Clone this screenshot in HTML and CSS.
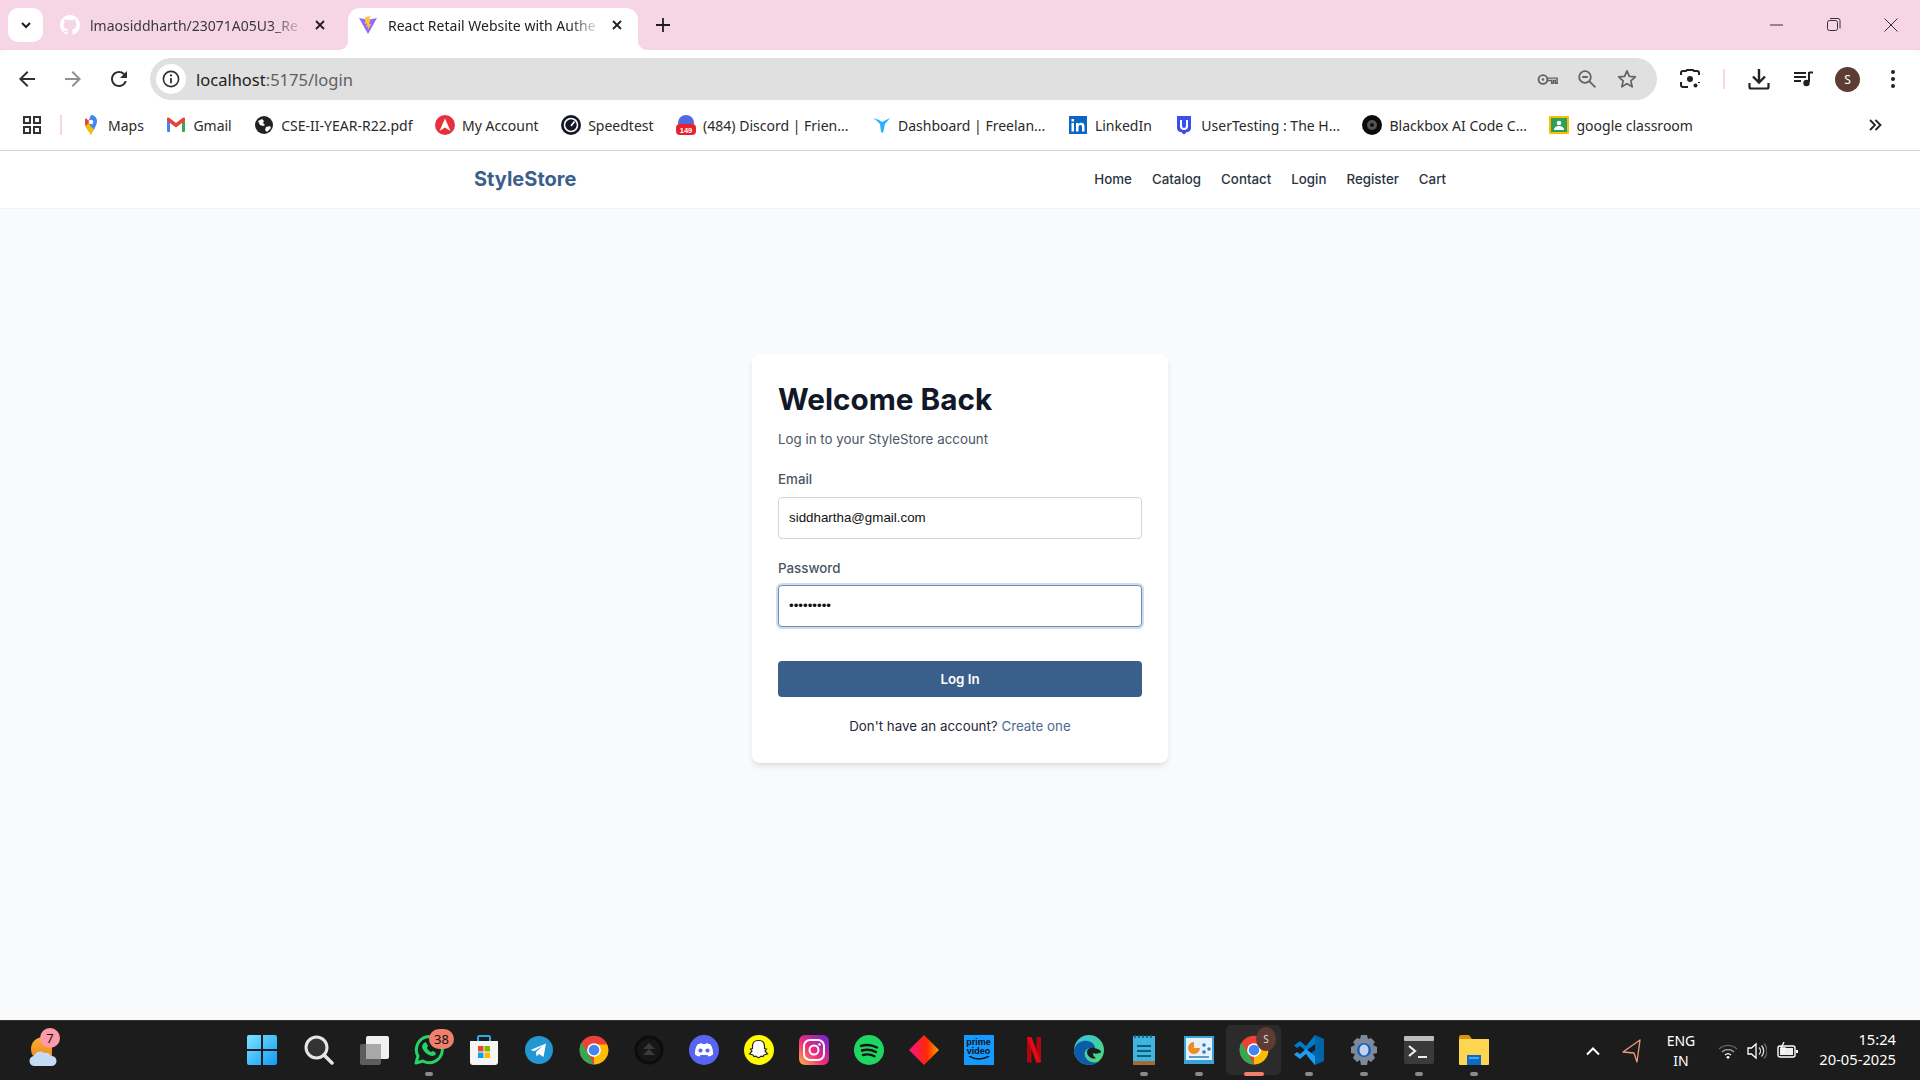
FILE: index.html
```html
<!DOCTYPE html>
<html lang="en">
<head>
<meta charset="utf-8">
<title>React Retail Website with Authentication</title>
<link rel="stylesheet" href="styles.css">
</head>
<body>
<header class="tabstrip">
  <div class="tab-search"><svg width="12" height="12" viewBox="0 0 12 12"><path d="M2 4l4 4 4-4" fill="none" stroke="#1f1f1f" stroke-width="2"/></svg></div>
  <div class="tab tab-idle">
    <svg width="20" height="20" viewBox="0 0 16 16"><path fill="#fff" d="M8 0C3.58 0 0 3.58 0 8c0 3.54 2.29 6.53 5.47 7.59.4.07.55-.17.55-.38 0-.19-.01-.82-.01-1.49-2.01.37-2.53-.49-2.69-.94-.09-.23-.48-.94-.82-1.13-.28-.15-.68-.52-.01-.53.63-.01 1.08.58 1.23.82.72 1.21 1.87.87 2.33.66.07-.52.28-.87.51-1.07-1.78-.2-3.64-.89-3.64-3.95 0-.87.31-1.59.82-2.15-.08-.2-.36-1.02.08-2.12 0 0 .67-.21 2.2.82.64-.18 1.32-.27 2-.27.68 0 1.36.09 2 .27 1.53-1.04 2.2-.82 2.2-.82.44 1.1.16 1.92.08 2.12.51.56.82 1.27.82 2.15 0 3.07-1.87 3.75-3.65 3.95.29.25.54.73.54 1.48 0 1.07-.01 1.93-.01 2.2 0 .21.15.46.55.38A8.013 8.013 0 0016 8c0-4.42-3.58-8-8-8z"/></svg>
    <span class="tab-title">lmaosiddharth/23071A05U3_Re</span>
    <svg class="tab-x" width="12" height="12" viewBox="0 0 12 12"><path d="M2 2l8 8M10 2l-8 8" stroke="#1f1f1f" stroke-width="1.8"/></svg>
  </div>
  <div class="tab tab-active">
    <svg width="20" height="20" viewBox="0 0 20 20"><path fill="#8f6bff" d="M1 3l9 16 9-16-9 1.7z"/><path fill="#ffc62b" d="M12.6 1L7.4 2 7 9l2-.4-.6 3.4 2-.5-.8 4 3.6-6.6-2.1.4 1.4-4.7-1.9.4z"/></svg>
    <span class="tab-title">React Retail Website with Authe</span>
    <svg class="tab-x" width="12" height="12" viewBox="0 0 12 12"><path d="M2 2l8 8M10 2l-8 8" stroke="#1f1f1f" stroke-width="1.8"/></svg>
  </div>
  <svg class="tab-new" width="14" height="14" viewBox="0 0 14 14"><path d="M7 0v14M0 7h14" stroke="#1f1f1f" stroke-width="1.8"/></svg>
  <div class="win-controls">
    <svg width="14" height="14" viewBox="0 0 14 14"><path d="M0 7h13" stroke="#333" stroke-width="1"/></svg>
    <svg width="14" height="14" viewBox="0 0 14 14"><rect x=".5" y="2.5" width="10" height="10" rx="2" fill="none" stroke="#333"/><path d="M3 .5h8a2 2 0 012 2v8" fill="none" stroke="#333"/></svg>
    <svg width="14" height="14" viewBox="0 0 14 14"><path d="M.5.5l13 13M13.5.5l-13 13" stroke="#333"/></svg>
  </div>
</header>

<div class="toolbar">
  <div class="nav-arrows">
    <svg width="24" height="24" viewBox="0 0 24 24"><path fill="#303030" d="M20 11H7.83l5.59-5.59L12 4l-8 8 8 8 1.41-1.41L7.83 13H20v-2z"/></svg>
    <svg width="24" height="24" viewBox="0 0 24 24"><path fill="#909090" d="M4 11h12.17l-5.59-5.59L12 4l8 8-8 8-1.41-1.41L16.17 13H4v-2z"/></svg>
    <svg width="24" height="24" viewBox="0 0 24 24"><path fill="#303030" d="M17.65 6.35A7.958 7.958 0 0012 4c-4.42 0-7.99 3.58-7.99 8s3.57 8 7.99 8c3.73 0 6.84-2.55 7.73-6h-2.08A5.99 5.99 0 0112 18c-3.31 0-6-2.69-6-6s2.69-6 6-6c1.66 0 3.14.69 4.22 1.78L13 11h7V4l-2.35 2.35z"/></svg>
  </div>
  <div class="omnibox">
    <span class="site-info"><svg width="18" height="18" viewBox="0 0 18 18"><circle cx="9" cy="9" r="7.6" fill="none" stroke="#303030" stroke-width="1.6"/><path d="M9 8v5.2" stroke="#303030" stroke-width="1.8"/><circle cx="9" cy="5.4" r="1.1" fill="#303030"/></svg></span>
    <span class="url"><span class="url-host">localhost</span>:5175/login</span>
    <div class="omni-actions">
      <svg class="oa-key" width="22" height="17" viewBox="0 0 24 18"><circle cx="6.5" cy="9" r="4.8" fill="none" stroke="#636363" stroke-width="2"/><circle cx="6.5" cy="9" r="1.4" fill="#636363"/><path d="M11 7.5h11v5.5h-2v-2.8h-2V13h-2v-2.8h-5" fill="none" stroke="#636363" stroke-width="1.6"/></svg>
      <svg width="20" height="20" viewBox="0 0 20 20"><circle cx="8" cy="8" r="5.8" fill="none" stroke="#636363" stroke-width="1.8"/><path d="M5.2 8h5.6M12.4 12.4l6 6" stroke="#636363" stroke-width="1.8"/></svg>
      <svg width="20" height="20" viewBox="0 0 20 20"><path d="M10 1.8l2.4 5.6 6 .5-4.6 4 1.4 5.9-5.2-3.2-5.2 3.2 1.4-5.9-4.6-4 6-.5z" fill="none" stroke="#636363" stroke-width="1.7" stroke-linejoin="round"/></svg>
    </div>
  </div>
  <div class="tool-actions">
    <svg class="ta-lens" width="20" height="20" viewBox="0 0 20 20"><path d="M1 6V4a2 2 0 012-2h3l1-1h6l1 1h3a2 2 0 012 2v2M1 13v3a2 2 0 002 2h5M19 13v1" fill="none" stroke="#222" stroke-width="2"/><circle cx="10" cy="10" r="3" fill="#222"/><circle cx="15.5" cy="16.5" r="2" fill="#222"/></svg>
    <span class="ta-sep"></span>
    <svg class="ta-dl" width="22" height="22" viewBox="0 0 22 22"><path d="M11 1v13M5 8.500l6 6 6-6" fill="none" stroke="#222" stroke-width="2.400"/><path d="M1.500 15v4a1.500 1.500 0 001.500 1.500h16a1.500 1.500 0 001.500-1.500v-4" fill="none" stroke="#222" stroke-width="2.200"/></svg>
    <svg class="ta-media" width="20" height="16" viewBox="0 0 20 16"><path d="M0 2h12M0 6h12M0 10h7" stroke="#222" stroke-width="1.800"/><path d="M15 1.500h4M15 1v10" stroke="#222" stroke-width="2"/><circle cx="12.500" cy="12" r="3.200" fill="#222"/></svg>
    <span class="avatar">S</span>
    <svg class="ta-dots" width="4" height="18" viewBox="0 0 4 18"><circle cx="2" cy="2" r="2" fill="#222"/><circle cx="2" cy="9" r="2" fill="#222"/><circle cx="2" cy="16" r="2" fill="#222"/></svg>
  </div>
</div>

<nav class="bookmarks">
  <svg class="bm-apps" width="20" height="20" viewBox="0 0 20 20"><g fill="none" stroke="#333" stroke-width="2"><rect x="2" y="2" width="6" height="6"/><rect x="12" y="2" width="6" height="6"/><rect x="2" y="12" width="6" height="6"/><rect x="12" y="12" width="6" height="6"/></g></svg>
  <span class="bm-sep"></span>
  <div class="bm-list">
    <span class="bm"><svg width="20" height="20" viewBox="0 0 20 20"><path fill="#34a853" d="M10 20c-1-3-6-7-6-12h8z"/><path fill="#fbbc04" d="M4 8c0 5 5 9 6 12 .5-1.500 2-3.300 3-5L5.500 6z"/><path fill="#4285f4" d="M10 0c3.500 0 6 2.700 6 6 0 3-1.500 5-3 9L7 7z"/><path fill="#ea4335" d="M4.700 3l4 3.500L5 11c-1-1-1-3-1-4.500S4 4 4.700 3z"/><circle cx="10" cy="7" r="2.300" fill="#fff"/></svg>Maps</span>
    <span class="bm"><svg width="20" height="20" viewBox="0 0 20 20"><path fill="#4285f4" d="M1 5l3 2v10H2a1 1 0 01-1-1z"/><path fill="#34a853" d="M19 5l-3 2v10h2a1 1 0 001-1z"/><path fill="#ea4335" d="M1 3.500C1 2.500 2.500 2 3.500 3L10 8l6.500-5c1-1 2.500-.5 2.500.5V6l-3 2-6 4.500L4 8 1 6z"/></svg>Gmail</span>
    <span class="bm"><svg width="20" height="20" viewBox="0 0 20 20"><circle cx="10" cy="10" r="9" fill="#222"/><path fill="#fff" d="M4 6l4-2 2 2-1 2 2 2-2 1-3-1zM12 12l4-1 1 2-4 4-2-2z"/></svg>CSE-II-YEAR-R22.pdf</span>
    <span class="bm"><svg width="20" height="20" viewBox="0 0 20 20"><circle cx="10" cy="10" r="10" fill="#e8303c"/><path fill="#fff" d="M10 3.500L15.500 16 10 12.500 4.500 16z"/></svg>My Account</span>
    <span class="bm"><svg width="20" height="20" viewBox="0 0 20 20"><circle cx="10" cy="10" r="10" fill="#141526"/><circle cx="10" cy="10" r="6.500" fill="none" stroke="#fff" stroke-width="1.600"/><path d="M10 11l3.500-4.500" stroke="#fff" stroke-width="1.800"/></svg>Speedtest</span>
    <span class="bm"><svg width="20" height="20" viewBox="0 0 20 20"><circle cx="10" cy="8" r="8" fill="#5468e0"/><rect x="0" y="9" width="20" height="11" rx="4" fill="#e8222a"/><text x="10" y="18" text-anchor="middle" class="bm-badge">149</text></svg>(484) Discord | Frien...</span>
    <span class="bm"><svg width="20" height="20" viewBox="0 0 20 20"><path fill="#29b2fe" d="M2 3l6 2 3 2 8-4-5 6-2 9-2-1-1-8-3-3z"/></svg>Dashboard | Freelan...</span>
    <span class="bm"><svg width="20" height="20" viewBox="0 0 20 20"><rect x="1" y="1" width="18" height="18" fill="#0a66c2"/><path fill="#fff" d="M3.500 8h2.500v8.500H3.500zM3.500 4h2.500v2.500H3.500zM8 8h2.400v1.200C11 8.300 12 7.800 13.200 7.800c2.400 0 3.300 1.400 3.300 3.800v4.900H14V12c0-1.300-.4-2-1.500-2-1.200 0-2 .8-2 2.200v4.300H8z"/></svg>LinkedIn</span>
    <span class="bm"><svg width="20" height="20" viewBox="0 0 20 20"><path fill="#3a4ef0" d="M3 1h14v12c0 2.500-2 4-4 4l-3 2.500L7 17c-2 0-4-1.500-4-4z"/><path d="M7 5v6a3 3 0 006 0V5" fill="none" stroke="#fff" stroke-width="2"/></svg>UserTesting : The H...</span>
    <span class="bm"><svg width="20" height="20" viewBox="0 0 20 20"><circle cx="10" cy="10" r="10" fill="#0b0b0b"/><circle cx="10" cy="10" r="5" fill="#555"/><circle cx="10" cy="10" r="2" fill="#111"/></svg>Blackbox AI Code C...</span>
    <span class="bm"><svg width="20" height="20" viewBox="0 0 20 20"><rect width="20" height="18" y="1" fill="#fbbc04" rx="1"/><rect x="2" y="3" width="16" height="14" fill="#2e9e5b"/><circle cx="10" cy="8" r="2.300" fill="#fff"/><path fill="#fff" d="M5 15c0-3 2.500-4 5-4s5 1 5 4z"/></svg>google classroom</span>
  </div>
  <svg class="bm-more" width="14" height="14" viewBox="0 0 14 14"><path d="M2 2l5 5-5 5M7.500 2l5 5-5 5" fill="none" stroke="#222" stroke-width="1.800"/></svg>
</nav>

<div class="site-nav">
  <a class="brand">StyleStore</a>
  <div class="site-links"><a>Home</a><a>Catalog</a><a>Contact</a><a>Login</a><a>Register</a><a>Cart</a></div>
</div>

<main class="page">
  <section class="card">
    <h1>Welcome Back</h1>
    <p class="sub">Log in to your StyleStore account</p>
    <label class="lbl lbl-email">Email</label>
    <input class="field" type="email" value="siddhartha@gmail.com">
    <label class="lbl lbl-pass">Password</label>
    <input class="field field-focus" type="password" value="password1">
    <button class="submit">Log In</button>
    <p class="foot">Don't have an account? <a>Create one</a></p>
  </section>
</main>

<footer class="taskbar">
  <div class="tb-weather">
    <svg width="30" height="32" viewBox="0 0 30 32"><defs><linearGradient id="sun" x1="0" y1="0" x2="0" y2="1"><stop offset="0" stop-color="#fbb034"/><stop offset="1" stop-color="#ec8b1e"/></linearGradient></defs><path fill="url(#sun)" d="M15 2a12 12 0 00-12 12c0 3 1 6 3 8h18V6c-2-2.500-5-4-9-4z"/><path fill="#c3dbf5" d="M7 31a5 5 0 01-1-10c1-4 7-6 10-3 3-1 6 0 7 3a5 5 0 011 10z"/></svg>
    <span class="tb-badge badge-weather">7</span>
  </div>
  <div class="tb-apps">
    <span class="app app-start"><svg width="30" height="30" viewBox="0 0 30 30"><defs><linearGradient id="win" x1="0" y1="0" x2="1" y2="1"><stop offset="0" stop-color="#7de3ff"/><stop offset="1" stop-color="#0f9bf5"/></linearGradient></defs><path fill="url(#win)" d="M0 2a2 2 0 012-2h12v14H0zM16 0h12a2 2 0 012 2v12H16zM0 16h14v14H2a2 2 0 01-2-2zM16 16h14v12a2 2 0 01-2 2H16z"/></svg></span>
    <span class="app"><svg width="30" height="30" viewBox="0 0 30 30"><circle cx="12.500" cy="12.500" r="10.500" fill="#333" stroke="#e6e6e6" stroke-width="3"/><path d="M20 20l8 8" stroke="#e6e6e6" stroke-width="3.500" stroke-linecap="round"/></svg></span>
    <span class="app"><svg width="30" height="30" viewBox="0 0 30 30"><rect x="1" y="9" width="21" height="21" rx="2" fill="#5d5d5d"/><rect x="7" y="1" width="23" height="23" rx="2" fill="#f0f0f0"/><rect x="7" y="9" width="15" height="15" fill="#a8a8a8"/></svg></span>
    <span class="app"><svg width="32" height="32" viewBox="0 0 32 32"><path d="M3 29l2-7a13 13 0 115 5z" fill="none" stroke="#25d366" stroke-width="3" stroke-linejoin="round"/><path fill="#25d366" d="M11 9c1-1 2-1 3 1l1 2-1 2c1 2 2 3 4 4l2-1 3 2c0 2-2 3-4 3-5-1-9-5-10-9 0-2 1-3 2-4z"/></svg><span class="tb-badge badge-wa">38</span><i class="dot"></i></span>
    <span class="app"><svg width="30" height="32" viewBox="0 0 30 32"><path d="M9 7V3a1 1 0 011-1h10a1 1 0 011 1v4" fill="none" stroke="#2aa8e8" stroke-width="2"/><path fill="#f5f5f5" d="M1 7h28v21a3 3 0 01-3 3H4a3 3 0 01-3-3z"/><rect x="9" y="12" width="5.500" height="5.500" fill="#e8492a"/><rect x="15.500" y="12" width="5.500" height="5.500" fill="#7fba00"/><rect x="9" y="18.500" width="5.500" height="5.500" fill="#00a4ef"/><rect x="15.500" y="18.500" width="5.500" height="5.500" fill="#ffb900"/></svg></span>
    <span class="app"><svg width="28" height="28" viewBox="0 0 28 28"><circle cx="14" cy="14" r="14" fill="#2596d4"/><path fill="#fff" d="M5.500 14L21 7.500 18.500 21l-4.500-3-2.500 2.500-.5-4.500 6.500-6-8 5z"/></svg></span>
    <span class="app"><svg width="30" height="30" viewBox="0 0 48 48"><circle cx="24" cy="24" r="23" fill="#ea4335"/><path fill="#34a853" d="M4 12l12 20 8 15c-12 0-23-10-23-23 0-4 1-9 3-12z"/><path fill="#fbbc04" d="M24 15h21c1 3 2 6 2 9 0 13-10 23-23 23z"/><circle cx="24" cy="24" r="11" fill="#fff"/><circle cx="24" cy="24" r="8.500" fill="#4285f4"/></svg></span>
    <span class="app"><svg width="30" height="30" viewBox="0 0 30 30"><circle cx="15" cy="15" r="13" fill="#161616" stroke="#0c0c0c" stroke-width="3"/><path d="M15 8l6 6H9zM15 14l6 6H9z" fill="#3a3a3a"/></svg></span>
    <span class="app"><svg width="30" height="30" viewBox="0 0 30 30"><circle cx="15" cy="15" r="15" fill="#5865f2"/><path fill="#fff" d="M8.500 9.500c2-1 4-1.300 4.500-1.300l.4.800h3.200l.4-.8c.5 0 2.500.3 4.500 1.300 2 3 2.800 6.500 2.500 10-1.500 1.200-3.200 2-4.500 2l-1-1.500h-7l-1 1.500c-1.300 0-3-.8-4.500-2-.3-3.500.5-7 2.500-10z"/><circle cx="11.500" cy="15.500" r="2.100" fill="#5865f2"/><circle cx="18.500" cy="15.500" r="2.100" fill="#5865f2"/></svg></span>
    <span class="app"><svg width="30" height="30" viewBox="0 0 30 30"><circle cx="15" cy="15" r="15" fill="#fffc00"/><path fill="#fff" stroke="#222" stroke-width="1.200" d="M15 5.500c3.500 0 5.500 2.500 5.500 6v2l2 .5-1.500 2 2.500 3-3.500 1-1 1.500-2-.3c-1 1-2 1.500-2.500 1.500s-1.500-.5-2.500-1.500l-2 .3-1-1.500-3.500-1 2.500-3-1.500-2 2-.5v-2c0-3.500 2-6 5.500-6z"/></svg></span>
    <span class="app"><svg width="30" height="30" viewBox="0 0 30 30"><defs><linearGradient id="ig" x1="0" y1="1" x2="1" y2="0"><stop offset="0" stop-color="#fdb44b"/><stop offset=".45" stop-color="#ee2a7b"/><stop offset="1" stop-color="#6228d7"/></linearGradient></defs><rect width="30" height="30" rx="6" fill="url(#ig)"/><rect x="5" y="5" width="20" height="20" rx="6" fill="none" stroke="#fff" stroke-width="2"/><circle cx="15" cy="15" r="4.500" fill="none" stroke="#fff" stroke-width="2"/><circle cx="20.500" cy="9.500" r="1.300" fill="#fff"/></svg></span>
    <span class="app"><svg width="30" height="30" viewBox="0 0 30 30"><circle cx="15" cy="15" r="15" fill="#1ed760"/><path d="M7 11c5-1.500 11-1 16 1.500M8 15.500c4.500-1.200 9.500-.8 14 1.500M9 20c3.500-1 8-.7 11.500 1.200" fill="none" stroke="#191414" stroke-width="2.400" stroke-linecap="round"/></svg></span>
    <span class="app"><svg width="30" height="30" viewBox="0 0 30 30"><defs><linearGradient id="dia" x1="0" y1="0" x2="1" y2="0"><stop offset="0" stop-color="#ff0f8f"/><stop offset=".6" stop-color="#ff2a00"/><stop offset="1" stop-color="#ff9d00"/></linearGradient></defs><path fill="url(#dia)" d="M15 0l15 15-15 15L0 15z"/></svg></span>
    <span class="app"><span class="prime"><span>prime</span><span>video</span><svg width="22" height="5" viewBox="0 0 22 5"><path d="M1 0c6 4 13 4 20 0" fill="none" stroke="#111" stroke-width="1.500"/></svg></span></span>
    <span class="app"><svg width="14" height="26" viewBox="0 0 14 26"><path fill="#b1060f" d="M0 0h4.500v26L0 25z"/><path fill="#b1060f" d="M9.500 0H14v25l-4.500 1z"/><path fill="#e50914" d="M0 0h4.500l9.500 25-4.500 1z"/></svg></span>
    <span class="app"><svg width="30" height="30" viewBox="0 0 30 30"><defs><linearGradient id="edge" x1="0" y1="0" x2="1" y2="1"><stop offset="0" stop-color="#2fc4e8"/><stop offset="1" stop-color="#52d86a"/></linearGradient></defs><circle cx="15" cy="15" r="15" fill="url(#edge)"/><path fill="#0d5aa7" d="M0 15C2 7 9 5 14 6c5 1 8 5 7 9-2-2-6-3-9 0-3 3-1 10 5 12 4 1 7 0 8-1-3 3-7 4-10 4C7 30 0 23 0 15z"/><path fill="#1c1c1c" d="M13 17c0-3 3-5 7-4 6 1 7 3 7 4-1 2-8 2-8 1s-1 3 3 5c-4 2-9-2-9-6z"/></svg></span>
    <span class="app"><svg width="22" height="32" viewBox="0 0 22 32"><rect y="2" width="22" height="27" fill="#3fb4dd"/><rect y="27" width="22" height="4" fill="#a56a35"/><path d="M4 12h14M4 17h14M4 22h14" stroke="#0d5c82" stroke-width="2.200"/><path d="M2 1v3M6 1v3M10 1v3M14 1v3M18 1v3" stroke="#0d5c82" stroke-width="1.600"/></svg><i class="dot"></i></span>
    <span class="app"><svg width="30" height="28" viewBox="0 0 30 28"><rect width="30" height="28" fill="#3aa3dc"/><rect x="2" y="2" width="26" height="22" fill="#e6f2fa"/><path d="M10 6a6 6 0 106 6h-6z" fill="#f08a24"/><circle cx="20" cy="9" r="1.800" fill="#2a7fc0"/><circle cx="25" cy="13" r="1.800" fill="#2a7fc0"/><circle cx="20" cy="16" r="1.800" fill="#2a7fc0"/><path d="M5 21h20" stroke="#2a7fc0" stroke-width="1.500"/></svg><i class="dot"></i></span>
    <span class="app app-on"><svg width="30" height="30" viewBox="0 0 48 48"><circle cx="24" cy="24" r="23" fill="#ea4335"/><path fill="#34a853" d="M4 12l12 20 8 15c-12 0-23-10-23-23 0-4 1-9 3-12z"/><path fill="#fbbc04" d="M24 15h21c1 3 2 6 2 9 0 13-10 23-23 23z"/><circle cx="24" cy="24" r="11" fill="#fff"/><circle cx="24" cy="24" r="8.500" fill="#4285f4"/></svg><span class="tb-badge badge-s">S</span><i class="dot dot-on"></i></span>
    <span class="app"><svg width="30" height="30" viewBox="0 0 30 30"><path fill="#0065a9" d="M21 0l9 4v22l-9 4-8-9 8-6V9z"/><path fill="#007acc" d="M21 0v9l-9 7-6-5-3 2-3-2.500L6 6l6 5z"/><path fill="#1f9cf0" d="M21 30V21l-9-7-6 5-3-2-3 2.500L6 24l6-5z"/></svg><i class="dot"></i></span>
    <span class="app"><svg width="30" height="30" viewBox="0 0 30 30"><path fill="#7d8a99" d="M12 0h6l1 4 3-1 4 4-2 3 4 2v6l-4 1 2 4-4 4-3-2-1 5h-6l-1-5-3 2-4-4 2-4-4-1v-6l4-2-2-3 4-4 3 1z"/><circle cx="15" cy="15" r="7" fill="#1b5fc0"/><ellipse cx="15" cy="15" rx="4.500" ry="5.500" fill="#dfe9f5" opacity=".85"/></svg><i class="dot"></i></span>
    <span class="app"><svg width="30" height="28" viewBox="0 0 30 28"><rect width="30" height="28" rx="2" fill="#3a3a3a"/><rect width="30" height="5" rx="1" fill="#bcbcbc"/><path d="M5 10l6 5-6 5" fill="none" stroke="#eee" stroke-width="2.200"/><path d="M14 21h9" stroke="#eee" stroke-width="2"/></svg><i class="dot"></i></span>
    <span class="app"><svg width="30" height="30" viewBox="0 0 30 30"><path fill="#d9940f" d="M0 2a2 2 0 012-2h8l3 4h17v6H0z"/><rect y="4" width="30" height="26" rx="1" fill="#fdd551"/><rect x="8" y="20" width="14" height="10" fill="#0a6cc4"/><rect x="10" y="22" width="10" height="2" fill="#46a8ee"/></svg><i class="dot"></i></span>
  </div>
  <div class="tb-tray">
    <svg class="tr-up" width="14" height="10" viewBox="0 0 14 10"><path d="M1 8.500l6-6 6 6" fill="none" stroke="#fff" stroke-width="2"/></svg>
    <svg class="tr-loc" width="20" height="24" viewBox="0 0 20 24"><path d="M18 1L1 13l11 1 3 9z" fill="none" stroke="#ee9c80" stroke-width="1.300" stroke-linejoin="round"/></svg>
    <div class="tr-lang"><span>ENG</span><span>IN</span></div>
    <svg class="tr-wifi" width="20" height="16" viewBox="0 0 20 16"><path d="M1 6a13 13 0 0118 0" fill="none" stroke="#666" stroke-width="1.300"/><path d="M4 9a9 9 0 0112 0" fill="none" stroke="#aaa" stroke-width="1.300"/><path d="M7 12a4.500 4.500 0 016 0" fill="none" stroke="#fff" stroke-width="1.300"/><circle cx="10" cy="14.300" r="1.400" fill="#fff"/></svg>
    <svg class="tr-vol" width="20" height="20" viewBox="0 0 20 20"><path d="M1 7h3.500L9 3v14l-4.500-4H1z" fill="none" stroke="#fff" stroke-width="1.300"/><path d="M12 6.500a5 5 0 010 7M14.500 4.500a8 8 0 010 11" fill="none" stroke="#ddd" stroke-width="1.300"/><path d="M17 2.500a11 11 0 010 15" fill="none" stroke="#666" stroke-width="1.200"/></svg>
    <svg class="tr-bat" width="22" height="18" viewBox="0 0 22 18"><rect x="1" y="4" width="17" height="11" rx="2" fill="none" stroke="#fff" stroke-width="1.400"/><rect x="3" y="6" width="13" height="7" fill="#f0f0f0"/><path d="M20 8v3" stroke="#fff" stroke-width="2"/><path d="M7 0L4 6h4l-2 5" fill="none" stroke="#fff" stroke-width="1.300"/></svg>
    <div class="tr-clock"><span>15:24</span><span>20-05-2025</span></div>
  </div>
</footer>
</body>
</html>
```

FILE: styles.css
```css
* { box-sizing: border-box; }
html, body { margin: 0; height: 100%; }
body {
  height: 100vh;
  overflow: hidden;
  display: flex;
  flex-direction: column;
  background: #f9fafb;
  font-family: "Inter", "Liberation Sans", sans-serif;
}
svg { display: block; flex: none; }

/* browser chrome */
.tabstrip {
  height: 50px;
  background: #f6d5e5;
  display: flex;
  align-items: flex-start;
  padding: 8px 0 0 8px;
  position: relative;
  flex: none;
}
.tab-search {
  width: 35px; height: 34px;
  background: #fff;
  border-radius: 10px;
  display: flex; align-items: center; justify-content: center;
  margin-right: 17px;
}
.tab {
  height: 42px;
  display: flex;
  align-items: center;
  font-family: "Noto Sans", sans-serif;
  font-size: 14px;
  color: #222;
  padding: 0 12px 8px 0;
}
.tab-idle { width: 288px; padding-right: 22px; color: #3a3a3a; }
.tab-active {
  width: 290px;
  padding: 0 15px 8px 10px;
  background: #fff;
  border-radius: 12px 12px 0 0;
  position: relative;
}
.tab-active::before, .tab-active::after {
  content: "";
  position: absolute;
  bottom: 0;
  width: 10px; height: 10px;
}
.tab-active::before { left: -10px; background: radial-gradient(circle at 0 0, transparent 10px, #fff 10.500px); }
.tab-active::after { right: -10px; background: radial-gradient(circle at 100% 0, transparent 10px, #fff 10.500px); }
.tab-title {
  flex: 1;
  min-width: 0;
  margin: 0 10px;
  white-space: nowrap;
  -webkit-mask-image: linear-gradient(to right, #000 85%, transparent);
  mask-image: linear-gradient(to right, #000 85%, transparent);
}
.tab-x { flex: none; }
.tab-new { margin: 10px 0 0 18px; }
.win-controls {
  margin-left: auto;
  display: flex;
  gap: 43px;
  padding: 10px 22px 0 0;
}

.toolbar {
  height: 52px;
  background: #fff;
  border-radius: 10px 10px 0 0;
  display: flex;
  align-items: center;
  flex: none;
  padding-top: 6px;
  position: relative;
}
.nav-arrows { display: flex; gap: 22px; padding-left: 15px; width: 150px; }
.omnibox {
  width: 1507px;
  height: 42px;
  background: #e0e0e0;
  border-radius: 21px;
  display: flex;
  align-items: center;
  padding-left: 6px;
}
.site-info {
  width: 30px; height: 30px;
  border-radius: 50%;
  background: #fff;
  display: flex; align-items: center; justify-content: center;
}
.url {
  margin-left: 10px;
  font-family: "Noto Sans", sans-serif;
  font-size: 16.500px;
  color: #5f5f5f;
}
.url-host { color: #222; }
.omni-actions { margin-left: auto; display: flex; align-items: center; gap: 20px; padding-right: 20px; }
.oa-key { margin-right: -2px; }
.tool-actions { display: flex; align-items: center; flex: 1; padding-left: 23px; }
.ta-sep { width: 2px; height: 20px; background: #f6d5e5; margin: 0 23px; }
.ta-media { margin: 0 21px 0 24px; }
.avatar {
  width: 25px; height: 25px;
  border-radius: 50%;
  background: #5d3c33;
  color: #fff;
  font: 12px "Noto Sans", sans-serif;
  display: flex; align-items: center; justify-content: center;
}
.ta-dots { margin-left: 31px; }

.bookmarks {
  height: 49px;
  background: #fff;
  border-bottom: 1px solid #d3d3d3;
  display: flex;
  align-items: center;
  padding: 0 0 2px 22px;
  flex: none;
}
.bm-sep { width: 2px; height: 20px; background: #f6d5e5; margin: 0 19px 0 18px; }
.bm-list { display: flex; gap: 22.500px; align-items: center; }
.bm {
  display: flex;
  align-items: center;
  gap: 7px;
  font-family: "Noto Sans", sans-serif;
  font-size: 14px;
  color: #2a2a2a;
  white-space: nowrap;
}
.bm-badge { font: 700 7.500px "Liberation Sans", sans-serif; fill: #fff; }
.bm-more { margin-left: auto; margin-right: 38px; }

/* site */
.site-nav {
  height: 58px;
  background: #fff;
  border-bottom: 1px solid #f1f2f4;
  display: flex;
  align-items: center;
  padding: 0 0 2px 474px;
  flex: none;
}
.brand { font-size: 20px; font-weight: 700; color: #3b5f8a; }
.site-links {
  margin-left: 518px;
  display: flex;
  gap: 20px;
  font-size: 13.320px;
  font-weight: 500;
  color: #2b3443;
}
.page {
  flex: 1;
  display: flex;
  justify-content: center;
  align-items: flex-start;
  padding-top: 145px;
  min-height: 0;
}
.card {
  width: 416px;
  height: 409px;
  background: #fff;
  border-radius: 8px;
  box-shadow: 0 4px 6px -1px rgba(0,0,0,.1), 0 2px 4px -2px rgba(0,0,0,.07);
  padding: 27px 26px 26px;
  display: flex;
  flex-direction: column;
}
.card h1 { margin: 0; font-size: 29.700px; line-height: 36px; font-weight: 700; color: #111827; }
.sub { margin: 14px 0 0; font-size: 13.350px; line-height: 17px; color: #4b5563; }
.lbl { font-size: 13.350px; line-height: 18px; font-weight: 500; color: #4b5563; }
.lbl-email { margin-top: 22px; margin-bottom: 9px; }
.lbl-pass { margin-top: 20px; margin-bottom: 8px; }
.field {
  width: 100%;
  height: 42px;
  border: 1px solid #d1d5db;
  border-radius: 4px;
  padding: 0 10px 2px;
  font: 13.350px "Liberation Sans", sans-serif;
  color: #111;
  background: #fff;
  outline: none;
}
.field-focus {
  border-color: #6b8dbd;
  box-shadow: 0 0 0 2px #d0dcea;
}
.submit {
  margin-top: 34px;
  height: 36px;
  border: 0;
  border-radius: 4px;
  background: #3b5f8b;
  color: #fff;
  font: 600 13.350px "Inter", sans-serif;
}
.foot { margin: 20px 0 0; text-align: center; font-size: 13.350px; line-height: 18px; color: #1f2937; }
.foot a { color: #4a6a94; }

/* taskbar */
.taskbar {
  height: 60px;
  background: #1c1c1c;
  border-top: 1px solid #333;
  display: flex;
  align-items: flex-start;
  position: relative;
  flex: none;
  color: #fff;
  font-family: "Noto Sans", sans-serif;
}
.tb-weather { position: relative; margin: 14px 0 0 28px; width: 30px; }
.tb-apps { display: flex; margin-left: 178px; }
.app {
  width: 55px;
  height: 58px;
  display: flex;
  align-items: center;
  justify-content: center;
  position: relative;
}
.app-start svg { margin-right: 3px; }
.app-on { background: #2b2b2b; border-radius: 5px; height: 50px; margin-top: 4px; }
.dot {
  position: absolute;
  left: 50%;
  bottom: 3px;
  width: 8px; height: 4px;
  margin-left: -4px;
  border-radius: 2px;
  background: #8a8a8a;
}
.dot-on { width: 20px; margin-left: -10px; background: #f0806a; bottom: -1px; }
.tb-badge {
  position: absolute;
  display: flex;
  align-items: center;
  justify-content: center;
  border-radius: 50%;
  color: #111;
  font-size: 13px;
}
.badge-weather { top: -7px; left: 12px; width: 20px; height: 20px; background: #ff9aa8; }
.badge-wa { top: 8px; left: 28px; width: 25px; height: 20px; border-radius: 10px; background: #f0806a; }
.badge-s { top: 2px; left: 30px; width: 20px; height: 24px; background: #5d3c33; color: #ddd; font-size: 10px; }
.prime {
  width: 30px; height: 30px;
  background: #1399ff;
  color: #111;
  display: flex;
  flex-direction: column;
  align-items: center;
  font: 700 9px/9px "Liberation Sans", sans-serif;
  padding-top: 3px;
}
.tb-tray { position: absolute; left: 1586px; top: 0; right: 0; height: 59px; display: flex; align-items: center; }
.tr-loc { margin-left: 22px; }
.tr-lang {
  width: 44px;
  margin-left: 17px;
  display: flex;
  flex-direction: column;
  align-items: center;
  gap: 3px;
  font-size: 14px;
  line-height: 17px;
}
.tr-wifi { margin-left: 15px; }
.tr-vol { margin-left: 9px; }
.tr-bat { margin-left: 10px; }
.tr-clock {
  margin-left: auto;
  padding: 0 24px 2px 0;
  display: flex;
  flex-direction: column;
  align-items: flex-end;
  gap: 3px;
  font-size: 14.700px;
  line-height: 17px;
}
```
